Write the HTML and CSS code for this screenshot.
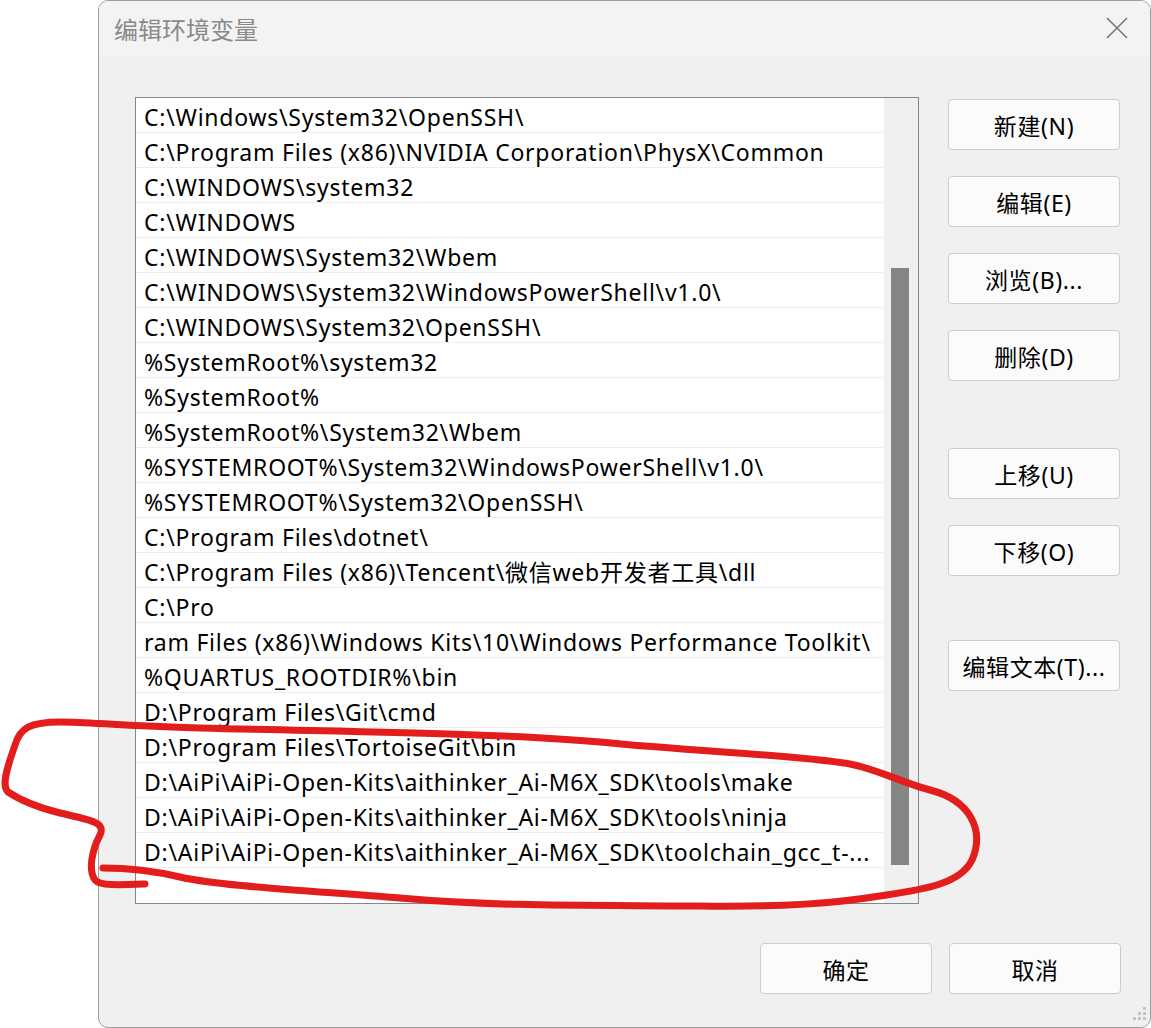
FILE: index.html
```html
<!DOCTYPE html>
<html lang="zh-CN">
<head>
<meta charset="utf-8">
<title>编辑环境变量</title>
<link rel="stylesheet" href="styles.css">
</head>
<body>
<div class="dialog">
  <div class="titlebar">
    <span class="title">编辑环境变量</span>
    <svg class="close" width="22" height="22" viewBox="0 0 22 22"><path d="M1 1 L21 21 M21 1 L1 21" stroke="#777" stroke-width="1.6" fill="none"/></svg>
  </div>
  <div class="content">
    <div class="list">
      <div class="rows">
        <div class="row">C:\Windows\System32\OpenSSH\</div>
        <div class="row">C:\Program Files (x86)\NVIDIA Corporation\PhysX\Common</div>
        <div class="row">C:\WINDOWS\system32</div>
        <div class="row">C:\WINDOWS</div>
        <div class="row">C:\WINDOWS\System32\Wbem</div>
        <div class="row">C:\WINDOWS\System32\WindowsPowerShell\v1.0\</div>
        <div class="row">C:\WINDOWS\System32\OpenSSH\</div>
        <div class="row">%SystemRoot%\system32</div>
        <div class="row">%SystemRoot%</div>
        <div class="row">%SystemRoot%\System32\Wbem</div>
        <div class="row">%SYSTEMROOT%\System32\WindowsPowerShell\v1.0\</div>
        <div class="row">%SYSTEMROOT%\System32\OpenSSH\</div>
        <div class="row">C:\Program Files\dotnet\</div>
        <div class="row">C:\Program Files (x86)\Tencent\微信web开发者工具\dll</div>
        <div class="row">C:\Pro</div>
        <div class="row">ram Files (x86)\Windows Kits\10\Windows Performance Toolkit\</div>
        <div class="row">%QUARTUS_ROOTDIR%\bin</div>
        <div class="row">D:\Program Files\Git\cmd</div>
        <div class="row">D:\Program Files\TortoiseGit\bin</div>
        <div class="row">D:\AiPi\AiPi-Open-Kits\aithinker_Ai-M6X_SDK\tools\make</div>
        <div class="row">D:\AiPi\AiPi-Open-Kits\aithinker_Ai-M6X_SDK\tools\ninja</div>
        <div class="row">D:\AiPi\AiPi-Open-Kits\aithinker_Ai-M6X_SDK\toolchain_gcc_t-...</div>
      </div>
      <div class="scrollbar"><div class="thumb"></div></div>
    </div>
    <div class="side">
      <div class="group">
        <button class="btn">新建(N)</button>
        <button class="btn">编辑(E)</button>
        <button class="btn">浏览(B)...</button>
        <button class="btn">删除(D)</button>
      </div>
      <div class="group group-mid">
        <button class="btn">上移(U)</button>
        <button class="btn">下移(O)</button>
      </div>
      <div class="group group-last">
        <button class="btn">编辑文本(T)...</button>
      </div>
    </div>
  </div>
  <div class="footer">
    <button class="btn">确定</button>
    <button class="btn">取消</button>
  </div>
  <svg class="grip" width="18" height="18" viewBox="0 0 18 18">
    <rect x="13" y="1" width="3" height="3" fill="#c4c4c4"/>
    <rect x="8" y="6" width="3" height="3" fill="#c4c4c4"/>
    <rect x="13" y="6" width="3" height="3" fill="#c4c4c4"/>
    <rect x="3" y="11" width="3" height="3" fill="#c4c4c4"/>
    <rect x="8" y="11" width="3" height="3" fill="#c4c4c4"/>
    <rect x="13" y="11" width="3" height="3" fill="#c4c4c4"/>
  </svg>
</div>
<svg class="scribble" width="1151" height="1028" viewBox="0 0 1151 1028">
  <path d="M 145 884 C 120 885, 100 886, 95 880 C 88 870, 92 850, 100 835 C 106 822, 90 820, 60 813 C 40 808, 20 800, 8 792 C 0 785, 10 760, 15 745 C 20 728, 30 722, 60 722 C 90 722, 120 726, 200 728 C 350 732, 500 733, 600 742 C 700 752, 800 755, 850 764 C 880 770, 900 782, 930 790 C 970 800, 985 830, 972 860 C 960 885, 920 890, 880 896 C 830 904, 780 907, 700 906 C 600 905, 500 907, 400 898 C 300 890, 220 886, 180 877 C 150 870, 120 868, 103 868" stroke="#e31c1c" stroke-width="7" fill="none" stroke-linecap="round" stroke-linejoin="round"/>
</svg>
</body>
</html>
```
FILE: styles.css
```css
html, body {
  margin: 0;
  padding: 0;
  background: #ffffff;
  width: 1151px;
  height: 1028px;
  overflow: hidden;
  position: relative;
  font-family: "Noto Sans", "Noto Sans CJK SC", sans-serif;
}

.dialog {
  position: relative;
  margin-left: 98px;
  width: 1053px;
  height: 1028px;
  box-sizing: border-box;
  border: 1px solid #9e9e9e;
  border-radius: 10px;
  background: #f0f0f0;
  overflow: hidden;
}

.titlebar {
  height: 56px;
  background: #f3f3f3;
  display: flex;
  align-items: center;
  justify-content: space-between;
  padding: 0 22px 0 15px;
}

.title {
  font-size: 24px;
  color: #8a8a8a;
  margin-top: -1px;
}

.close {
  margin-top: -3px;
}

.content {
  display: flex;
  padding: 40px 0 0 36px;
  gap: 29px;
}

.list {
  width: 784px;
  height: 807px;
  box-sizing: border-box;
  border: 1px solid #828790;
  background: #ffffff;
  display: flex;
}

.rows {
  width: 748px;
}

.row {
  height: 34px;
  border-bottom: 1px solid #eeeeee;
  padding-left: 8px;
  font-size: 23px;
  letter-spacing: 0.75px;
  line-height: 39px;
  color: #000;
  white-space: nowrap;
  overflow: hidden;
}

.scrollbar {
  width: 34px;
  background: #f0f0f0;
  position: relative;
}

.thumb {
  position: absolute;
  left: 7px;
  top: 170px;
  width: 18px;
  height: 597px;
  background: #858585;
}

.side {
  display: flex;
  flex-direction: column;
  padding-top: 2px;
}

.group {
  display: flex;
  flex-direction: column;
  gap: 26px;
}

.group-mid {
  margin-top: 67px;
}

.group-last {
  margin-top: 64px;
}

.btn {
  width: 172px;
  height: 51px;
  box-sizing: border-box;
  border: 1px solid #cccccc;
  border-radius: 4px;
  background: #fbfbfb;
  font-family: "Noto Sans", "Noto Sans CJK SC", sans-serif;
  font-size: 23px;
  letter-spacing: 0.6px;
  color: #000;
  padding: 0;
}

.footer {
  display: flex;
  justify-content: flex-end;
  gap: 17px;
  padding: 39px 29px 0 0;
}

.grip {
  position: absolute;
  right: 2px;
  bottom: 3px;
}

.scribble {
  position: absolute;
  left: 0;
  top: 0;
  pointer-events: none;
}
```
